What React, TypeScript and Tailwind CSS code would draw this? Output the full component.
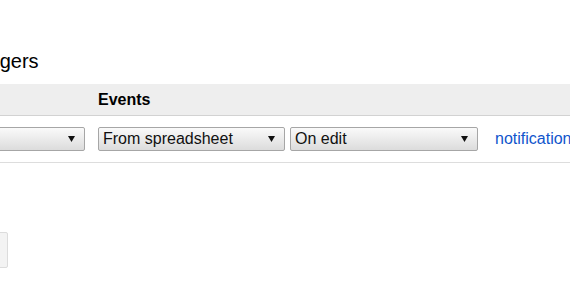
import React from "react";

function Caret() {
  return (
    <svg width="7" height="6" viewBox="0 0 7 6" className="shrink-0">
      <path d="M0 0 L7 0 L3.5 6 Z" fill="#111111" />
    </svg>
  );
}

function FakeSelect({ label, w }: { label: string; w: string }) {
  return (
    <div
      className={`${w} h-[24px] shrink-0 flex items-center justify-between pl-[4px] pr-[9px] border border-[#a6a6a6] rounded-[2px] bg-gradient-to-b from-[#fafafa] to-[#dcdcdc] text-[16px] leading-[18px] text-[#111111]`}
    >
      <span className="whitespace-nowrap">{label}</span>
      <Caret />
    </div>
  );
}

export default function App() {
  return (
    <div className="w-[570px] h-[299px] overflow-hidden bg-white text-black font-['Liberation_Sans',Arial,sans-serif]">
      <div className="ml-[-34px] pt-[49px] h-[84px] text-[20px] leading-[24px] whitespace-nowrap">
        Triggers
      </div>
      <div className="h-[32px] bg-[#eeeeee] border-b border-[#d2d2d2] flex items-center">
        <div className="ml-[-102px] w-[200px] shrink-0" />
        <div className="font-bold text-[16px] leading-[18px]">Events</div>
      </div>
      <div className="h-[47px] border-b border-[#dddddd] flex items-center">
        <div className="ml-[-102px] flex items-center">
          <FakeSelect label="" w="w-[187px]" />
          <div className="w-[13px] shrink-0" />
          <FakeSelect label="From spreadsheet" w="w-[187px]" />
          <div className="w-[5px] shrink-0" />
          <FakeSelect label="On edit" w="w-[188px]" />
          <div className="w-[17px] shrink-0" />
          <a className="text-[16px] leading-[18px] text-[#1155cc] whitespace-nowrap cursor-pointer">
            notifications
          </a>
        </div>
      </div>
      <div className="mt-[69px] ml-[-60px] w-[68px] h-[36px] border border-[#dcdcdc] rounded-[2px] bg-[#f3f3f3]" />
    </div>
  );
}
